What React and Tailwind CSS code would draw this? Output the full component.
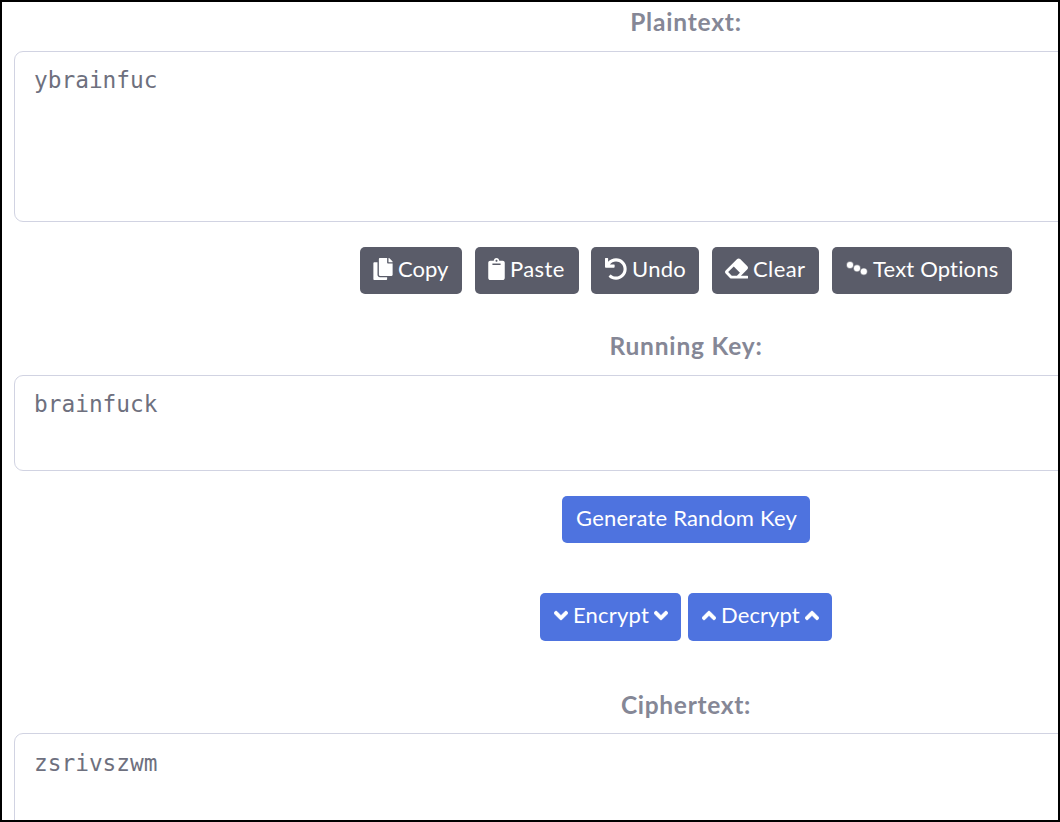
import { FaCopy, FaClipboard, FaUndo, FaEraser, FaAngleDown, FaAngleUp } from "react-icons/fa";

function Button({ className, children }) {
  return (
    <button
      type="button"
      className={`flex shrink-0 items-center rounded-[5px] pb-[4px] text-[22px] leading-none whitespace-nowrap text-white ${className}`}
    >
      {children}
    </button>
  );
}

function Heading({ className, children }) {
  return (
    <h2 className={`text-center text-[24.5px] font-bold leading-[36px] text-[#858796] ${className}`}>
      {children}
    </h2>
  );
}

function Field({ className, value }) {
  return (
    <textarea
      readOnly
      spellCheck={false}
      value={value}
      className={`block w-full shrink-0 resize-none overflow-hidden rounded-[9px] border border-[#d1d3e2] bg-white px-[19px] font-['DejaVu_Sans_Mono',monospace] text-[22.8px] leading-[34px] text-[#6e707e] outline-none ${className}`}
    />
  );
}

function DotsIcon() {
  return (
    <svg width="22" height="15" viewBox="0 0 22 15" fill="currentColor" className="mr-[5px] shrink-0">
      <circle cx="4" cy="4" r="3.7" opacity="0.35" />
      <circle cx="11" cy="7.2" r="3.7" opacity="0.35" />
      <circle cx="17.8" cy="10.6" r="3.7" opacity="0.35" />
      <circle cx="4" cy="4" r="3" />
      <circle cx="11" cy="7.2" r="3" />
      <circle cx="17.8" cy="10.6" r="3" />
    </svg>
  );
}

export default function App() {
  return (
    <main className="h-[822px] w-[1060px] overflow-hidden border-2 border-black bg-white pl-3 font-['Lato',sans-serif]">
      <div className="flex w-[1344px] flex-col">
        <Heading className="mt-[2px] tracking-[0.8px]">Plaintext:</Heading>
        <Field className="mt-[11px] h-[171px] pt-[11px]" value="ybrainfuc" />
        <div className="mt-[25px] flex h-[47px] justify-center">
          <Button className="mr-[13px] w-[102px] bg-[#5a5c69] pl-[13px]">
            <FaCopy className="mr-[4px] size-[22px] shrink-0 -ml-px" />
            <span>Copy</span>
          </Button>
          <Button className="mr-3 w-[104px] bg-[#5a5c69] pl-[13px] tracking-[0.4px]">
            <FaClipboard className="mr-[5px] h-[22px] w-[17px] shrink-0" />
            <span>Paste</span>
          </Button>
          <Button className="mr-[13px] w-[108px] bg-[#5a5c69] pl-[14px] tracking-[0.3px]">
            <FaUndo className="mr-[5px] size-[22px] shrink-0" />
            <span>Undo</span>
          </Button>
          <Button className="mr-[13px] w-[107px] bg-[#5a5c69] pl-[13px] tracking-[0.4px]">
            <FaEraser className="mr-[5px] size-[23px] shrink-0" />
            <span>Clear</span>
          </Button>
          <Button className="w-[180px] bg-[#5a5c69] pl-[14px] tracking-[0.18px]">
            <DotsIcon />
            <span>Text Options</span>
          </Button>
        </div>
        <Heading className="mt-[34px] tracking-[0.8px]">Running Key:</Heading>
        <Field className="mt-[11px] h-[96px] pt-[11px]" value="brainfuck" />
        <div className="mt-[25px] flex h-[47px] justify-center">
          <Button className="w-[248px] bg-[#4e73df] pl-[14px] tracking-[0.22px]">
            <span>Generate Random Key</span>
          </Button>
        </div>
        <div className="mt-[50px] flex h-[48px] justify-center gap-[7px]">
          <Button className="w-[141px] bg-[#4e73df] pl-[14px] tracking-[0.2px]">
            <FaAngleDown className="mr-[5px] h-[23px] w-[14px] shrink-0" stroke="currentColor" strokeWidth="12" />
            <span>Encrypt</span>
            <FaAngleDown className="ml-[5px] h-[23px] w-[14px] shrink-0" stroke="currentColor" strokeWidth="12" />
          </Button>
          <Button className="w-[144px] bg-[#4e73df] pl-[14px] tracking-[0.1px]">
            <FaAngleUp className="mr-[5px] h-[23px] w-[14px] shrink-0" stroke="currentColor" strokeWidth="12" />
            <span>Decrypt</span>
            <FaAngleUp className="ml-[5px] h-[23px] w-[14px] shrink-0" stroke="currentColor" strokeWidth="12" />
          </Button>
        </div>
        <Heading className="mt-[46px] tracking-[0.7px]">Ciphertext:</Heading>
        <Field className="mt-[10px] h-[171px] pt-[12px]" value="zsrivszwm" />
      </div>
    </main>
  );
}
